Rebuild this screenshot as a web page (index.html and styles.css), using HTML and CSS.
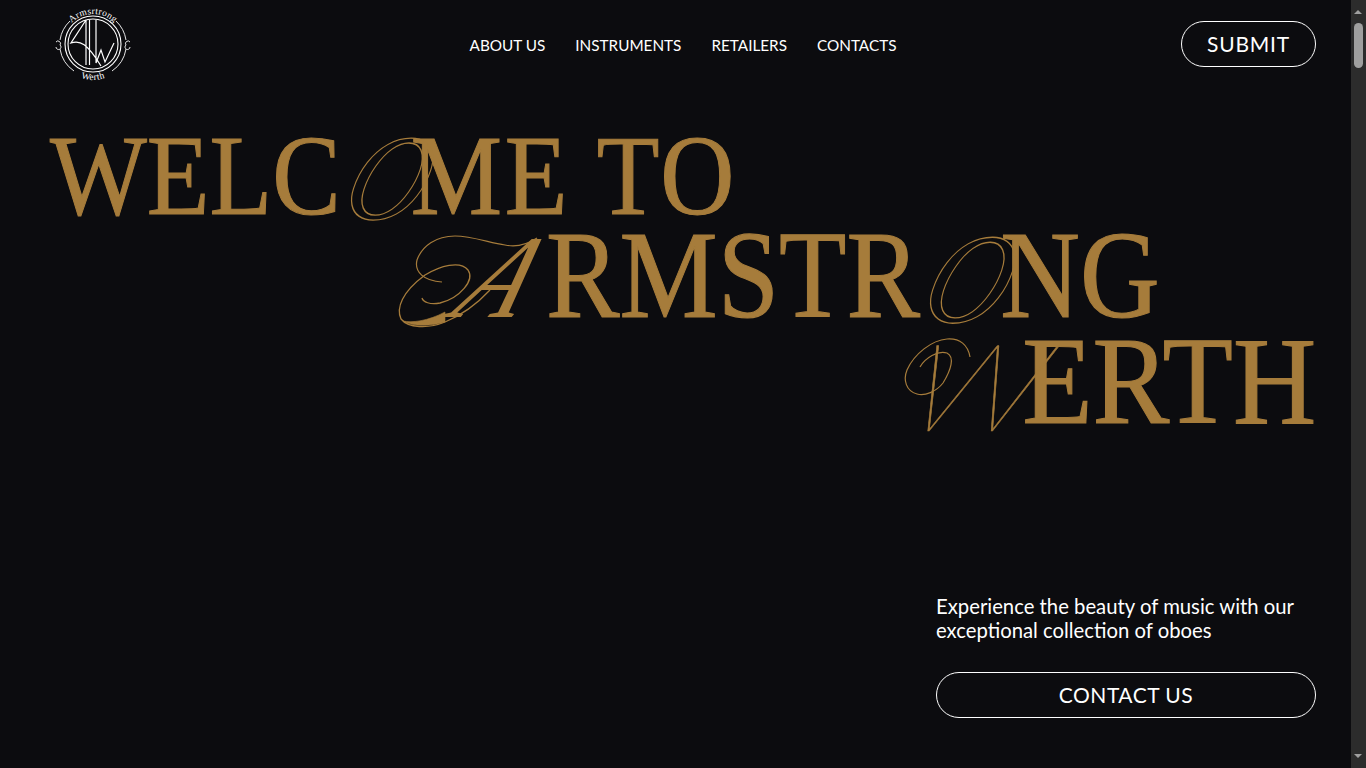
FILE: index.html
```html
<!DOCTYPE html>
<html lang="en">
<head>
  <meta charset="UTF-8" />
  <title>Armstrong Werth</title>
  <link rel="stylesheet" href="styles.css">
</head>
<body>
  <div class="page">
    <header class="header">
      <a class="logo" href="#">
        <svg width="76" height="84" viewBox="0 0 76 84" fill="none" stroke="#fff">
          <defs>
            <path id="arcTop" d="M8 42 A30 30 0 0 1 68 42" />
            <path id="arcBottom" d="M2 42 A36 36 0 0 0 74 42" />
          </defs>
          <circle cx="38" cy="42" r="28" stroke-width="1.1" />
          <circle cx="38" cy="42" r="25" stroke-width="1.1" />
          <path d="M5 38 A33 33 0 0 1 15 19 M61 19 A33 33 0 0 1 71 38 M71 47 A33 33 0 0 1 57 69 M19 69 A33 33 0 0 1 5 47" stroke-width="0.9" />
          <path d="M31 18 L16 41 C25 38 32 41 46 64 M31 18 L31 63 M34.5 18 L34.5 63 M41 18 L41 61 L46 48 L50 60 L59 41" stroke-width="1.2" />
          <path d="M1 40 A2.5 2.5 0 1 1 5 43 A2.5 2.5 0 1 1 1 45 M75 40 A2.5 2.5 0 1 0 71 43 A2.5 2.5 0 1 0 75 45" stroke-width="0.9" />
          <text class="logo-text" fill="#fff" stroke="none"><textPath href="#arcTop" startOffset="50%" text-anchor="middle">Armsrtrong</textPath></text>
          <text class="logo-text" fill="#fff" stroke="none"><textPath href="#arcBottom" startOffset="50%" text-anchor="middle">Werth</textPath></text>
        </svg>
      </a>
      <nav class="nav">
        <a href="#">ABOUT US</a>
        <a href="#">INSTRUMENTS</a>
        <a href="#">RETAILERS</a>
        <a href="#">CONTACTS</a>
      </nav>
      <a class="btn btn-submit" href="#">SUBMIT</a>
    </header>

    <main class="hero">
      <h1 class="title">
        <span class="line line-1">WELC<i class="swash swash-o">O</i><span class="tail">ME TO</span></span>
        <span class="line line-2"><i class="swash swash-a">A</i>RMSTR<i class="swash swash-o2">O</i>NG</span>
        <span class="line line-3"><i class="swash swash-w">W</i>ERTH</span>
      </h1>
      <div class="offer">
        <p>Experience the beauty of music with our exceptional collection of oboes</p>
        <a class="btn btn-contact" href="#">CONTACT US</a>
      </div>
    </main>

    <!-- pen flourishes on the script capitals, in page coordinates -->
    <svg class="flourish" width="1351" height="768" viewBox="0 0 1351 768" fill="none" stroke="#a67c3b">
      <path d="M537 238 C525 246 515 247 505 245 C490 243 472 236 455 236 C436 236 422 246 417 260 C414 272 424 281 442 282" stroke-width="1.2" />
      <path d="M490 290 C476 305 462 315 445 322 C428 329 408 328 401 319 C396 308 402 292 425 275 C440 266 460 260 468 270 C475 280 460 298 440 303 C430 305 423 302 422 298" stroke-width="1.3" />
      <path d="M445 322 C428 327 412 326 403 321 C412 323 428 321 445 312 Z" fill="#a67c3b" stroke-width="0.6" />
      <path d="M920 367 C925 358 938 350 947 353 C955 357 951 370 943 383 C936 392 925 396 917 394 C906 391 903 380 907 370 C914 354 932 340 947 339 C960 338 968 345 970 357" stroke-width="1.2" />
    </svg>
  </div>

  <aside class="scrollbar">
    <span class="arrow-up"></span>
    <span class="thumb"></span>
    <span class="arrow-down"></span>
  </aside>
</body>
</html>
```

FILE: styles.css
```css
* {
  box-sizing: border-box;
}
html, body {
  height: 100%;
}
body {
  margin: 0;
  display: flex;
  height: 768px;
  overflow: hidden;
  background-color: #0c0c0f;
  color: #fff;
  font-family: "Lato", sans-serif;
}
a {
  color: #fff;
  text-decoration: none;
}
.page {
  flex: 1;
  min-width: 0;
  position: relative;
  padding: 0 35px 0 50px;
}

/* Header */
.header {
  display: flex;
  align-items: flex-start;
  justify-content: space-between;
  height: 90px;
}
.logo {
  display: block;
  margin: 2px 0 0 5px;
  width: 76px;
}
.logo svg {
  display: block;
}
.logo-text {
  font-family: "Liberation Serif", serif;
  font-size: 9.5px;
  letter-spacing: 0.3px;
}
.nav {
  display: flex;
  gap: 30px;
  margin: 35px 0 0 54px;
  font-size: 15.3px;
  line-height: 20px;
}
.btn {
  display: flex;
  align-items: center;
  justify-content: center;
  height: 46px;
  padding-bottom: 1px;
  border: 1px solid #fff;
  border-radius: 23px;
}
.btn-submit {
  width: 135px;
  margin-top: 21px;
  font-size: 21px;
  letter-spacing: 0.8px;
}

/* Hero */
.hero {
  display: flex;
  flex-direction: column;
}
.title {
  display: flex;
  flex-direction: column;
  margin: 0;
  color: #a67c3b;
  font-family: "Liberation Serif", serif;
  font-weight: 400;
  -webkit-text-stroke: 1.1px #a67c3b;
  white-space: nowrap;
}
.line {
  display: block;
  transform-origin: left center;
}
.line-1 {
  font-size: 114px;
  line-height: 100px;
  margin-top: 36px;
  transform: scaleX(0.9);
}
.tail {
  letter-spacing: 3px;
}
.line-2 {
  font-size: 124px;
  line-height: 106px;
  margin: -3px 0 0 350px;
  transform: scaleX(0.89);
}
.line-3 {
  font-size: 124px;
  line-height: 106px;
  align-self: flex-end;
  transform: scaleX(0.93);
  transform-origin: right center;
}
.swash {
  display: inline-block;
  font-style: italic;
  line-height: 0;
  text-align: center;
}
.swash-o, .swash-o2 {
  font-size: 122px;
  color: transparent;
  -webkit-text-stroke: 1.3px #a67c3b;
  transform: translate(12px, 5px) skewX(-20deg);
}
.swash-o {
  width: 78px;
}
.swash-o2 {
  width: 90px;
  font-size: 128px;
}
.swash-a {
  width: 164px;
  font-size: 118px;
  -webkit-text-stroke: 0;
  transform: translate(35px, 0) skewX(-35deg);
}
.swash-w {
  width: 135px;
  font-family: "Lato", sans-serif;
  font-size: 122px;
  font-weight: 100;
  -webkit-text-stroke: 0.5px #a67c3b;
  transform: translate(22px, 8px) skewX(-18deg) scaleX(1.25);
}
.offer {
  align-self: flex-end;
  width: 380px;
  margin-top: 159px;
}
.offer p {
  margin: 0 0 30px;
  font-size: 20.3px;
  line-height: 24px;
}
.btn-contact {
  font-size: 21px;
  letter-spacing: 0.5px;
}
.flourish {
  position: absolute;
  top: 0;
  left: 0;
  pointer-events: none;
}

/* Scrollbar */
.scrollbar {
  flex: 0 0 15px;
  position: relative;
  background-color: #2c2c2c;
}
.thumb {
  position: absolute;
  top: 23px;
  left: 3px;
  width: 9px;
  height: 45px;
  border-radius: 5px;
  background-color: #9f9f9f;
}
.arrow-up, .arrow-down {
  position: absolute;
  left: 3px;
  border-left: 4.5px solid transparent;
  border-right: 4.5px solid transparent;
}
.arrow-up {
  top: 10px;
  border-bottom: 4.5px solid #9f9f9f;
}
.arrow-down {
  bottom: 10px;
  border-top: 4.5px solid #9f9f9f;
}
```
